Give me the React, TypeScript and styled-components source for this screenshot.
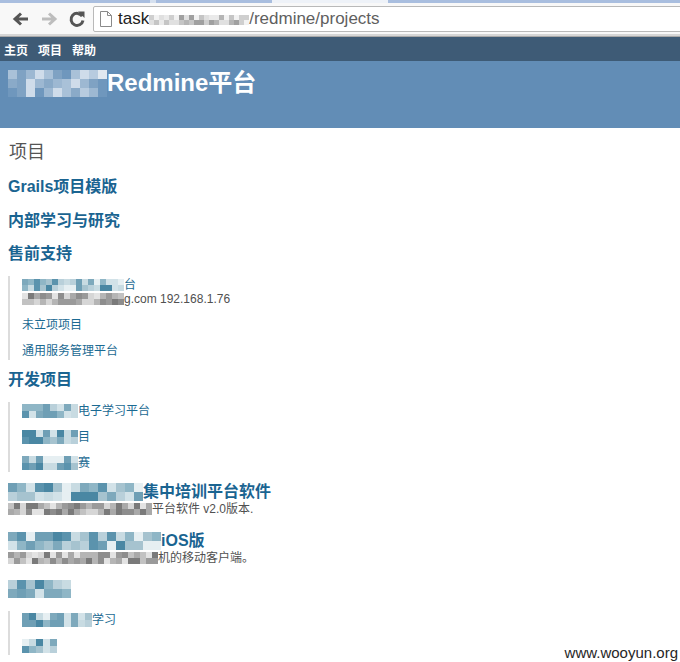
import React from 'react';
import styled, { createGlobalStyle } from 'styled-components';

const GlobalStyle = createGlobalStyle`
  html, body { margin: 0; padding: 0; background: #fff; overflow: hidden; }
  body { font-family: "Liberation Sans", "Noto Sans CJK SC", sans-serif; }
  ul { margin: 0; padding: 0; list-style: none; }
`;

const Page = styled.div`
  position: relative;
  width: 680px;
  height: 662px;
  overflow: hidden;
  background: #fff;
`;

/* ---------- browser chrome ---------- */
const TabStrip = styled.div`
  height: 3px;
  background: linear-gradient(90deg, #a9bedf 0 22%, #d5e0ef 22% 23%, #a9bedf 23% 40%, #eef2f8 40% 57%, #a9bedf 57% 100%);
`;

const Toolbar = styled.div`
  height: 31px;
  display: flex;
  align-items: flex-start;
  padding: 3px 0 0 7px;
  box-sizing: border-box;
  background: #f8f8f8;
`;

const NavButton = styled.span`
  width: 28px;
  height: 26px;
  display: flex;
  align-items: center;
  justify-content: center;
`;

const AddressBar = styled.div`
  flex: 1;
  height: 26px;
  margin-left: 2px;
  margin-right: -6px;
  box-sizing: border-box;
  border: 1px solid #b9b9b9;
  border-radius: 2px;
  background: #fff;
  display: flex;
  align-items: center;
  padding-left: 6px;
  font-size: 17px;
  white-space: nowrap;
`;

const Host = styled.span`
  color: #222;
  margin-left: 6px;
`;

const Path = styled.span`
  color: #5f5f5f;
`;

const ChromeBottom = styled.div`
  height: 3px;
  background: #d6d6d6;
  border-bottom: 1px solid #a8a8a8;
  box-sizing: border-box;
`;

/* ---------- redmine ---------- */
const TopMenu = styled.div`
  height: 24px;
  background: #3e5b76;
  display: flex;
  align-items: center;
  gap: 10px;
  padding-left: 4px;
`;

const TopMenuItem = styled.a`
  color: #fff;
  font-size: 12px;
  font-weight: bold;
  font-family: "Noto Sans CJK SC", sans-serif;
  text-decoration: none;
`;

const Header = styled.div`
  height: 67px;
  background: #628db6;
  box-sizing: border-box;
  padding: 9px 8px 0;
`;

const SiteTitle = styled.h1`
  margin: 0;
  font-size: 24px;
  line-height: 26px;
  font-weight: bold;
  color: #fff;
  white-space: nowrap;
`;

const Content = styled.div`
  padding: 11px 8px 0;
`;

const PageTitle = styled.h2`
  margin: 0 0 16px 1px;
  font-size: 18px;
  line-height: 22px;
  font-weight: normal;
  color: #555;
  font-family: "Noto Sans CJK SC", sans-serif;
`;

const Root = styled.li<{ $nested?: boolean }>`
  margin-bottom: ${(p) => (p.$nested ? '10px' : '13.5px')};
`;

const RootTitle = styled.a<{ $nested?: boolean }>`
  display: block;
  height: 20px;
  font-size: 16px;
  line-height: 20px;
  font-weight: bold;
  color: #1a6491;
  text-decoration: none;
  white-space: nowrap;
  margin-bottom: ${(p) => (p.$nested ? '12px' : '0')};
`;

const RootDesc = styled.div`
  font-size: 12px;
  line-height: 15px;
  color: #505050;
  white-space: nowrap;
`;

const Subtree = styled.ul`
  border-left: 2px solid #dcdcdc;
  padding: 2px 0 2px 12px !important;
`;

const Child = styled.li`
  & + & { margin-top: 12px; }
`;

const ChildLink = styled.a`
  display: block;
  height: 14px;
  font-size: 12px;
  line-height: 14px;
  color: #1b6a92;
  text-decoration: none;
  white-space: nowrap;
`;

const ChildDesc = styled.div`
  font-size: 12px;
  line-height: 14px;
  color: #505050;
  white-space: nowrap;
`;

const Watermark = styled.div`
  position: absolute;
  right: 2px;
  bottom: 0;
  font-size: 15px;
  line-height: 18px;
  color: #262626;
  font-family: "Liberation Sans", sans-serif;
`;

/* ---------- mosaic (pixelated redaction) ---------- */
type Tone = 'link' | 'text' | 'head' | 'url';

const palettes: Record<Tone, string[]> = {
  link: ['#4a87a3', '#5b93ad', '#8fb6c6', '#b9d0da', '#d2e2e8', '#e6eff2', '#6f9fb5', '#a6c3cf', '#c8dbe2', '#7ea9bc'],
  text: ['#7a7a7a', '#8d8d8d', '#a9a9a9', '#c2c2c2', '#d6d6d6', '#e3e3e3', '#9a9a9a', '#b5b5b5'],
  head: ['#7fa2c3', '#9db8d2', '#b7cbdf', '#cfdcea', '#a9c1d8', '#8aaac8', '#e0e8f0', '#6f97bd'],
  url: ['#b5b5b5', '#cfcfcf', '#e0e0e0', '#a0a0a0', '#eaeaea', '#c5c5c5', '#f2f2f2'],
};

const MosaicGrid = styled.span<{ $cols: number; $cell: number; $top: number }>`
  display: inline-grid;
  grid-template-columns: repeat(${(p) => p.$cols}, ${(p) => p.$cell}px);
  grid-auto-rows: ${(p) => p.$cell}px;
  vertical-align: top;
  margin-top: ${(p) => p.$top}px;
`;

const MosaicCell = styled.i`
  display: block;
`;

function Mosaic({ w, h, cell = 7, tone, seed = 1, top = 0 }: { w: number; h: number; cell?: number; tone: Tone; seed?: number; top?: number }) {
  const cols = Math.max(1, Math.round(w / cell));
  const rows = Math.max(1, Math.round(h / cell));
  const pal = palettes[tone];
  let s = seed * 9301 + 49297;
  const rnd = () => {
    s = (s * 9301 + 49297) % 233280;
    return s / 233280;
  };
  const cells = [];
  for (let i = 0; i < cols * rows; i++) {
    cells.push(<MosaicCell key={i} style={{ background: pal[Math.floor(rnd() * pal.length)] }} />);
  }
  return (
    <MosaicGrid $cols={cols} $cell={cell} $top={top}>
      {cells}
    </MosaicGrid>
  );
}

/* ---------- icons ---------- */
const BackIcon = ({ color }: { color: string }) => (
  <svg width="18" height="16" viewBox="0 0 18 16">
    <path d="M16 8H4M9 2.5L3 8l6 5.5" fill="none" stroke={color} strokeWidth="3" strokeLinejoin="miter" />
  </svg>
);

const ForwardIcon = ({ color }: { color: string }) => (
  <svg width="18" height="16" viewBox="0 0 18 16">
    <path d="M2 8h12M9 2.5L15 8l-6 5.5" fill="none" stroke={color} strokeWidth="3" />
  </svg>
);

const ReloadIcon = () => (
  <svg width="18" height="18" viewBox="0 0 18 18">
    <path d="M14.2 6.2A6 6 0 1 0 15 10.5" fill="none" stroke="#555" strokeWidth="3" />
    <path d="M10 1.5h6.5V8z" fill="#555" />
  </svg>
);

const PageIcon = () => (
  <svg width="12" height="16" viewBox="0 0 12 16">
    <path d="M0.5 0.5h7l4 4v11h-11z" fill="#fff" stroke="#8a8a8a" />
    <path d="M7.5 0.5v4h4" fill="none" stroke="#8a8a8a" />
  </svg>
);

export default function App() {
  return (
    <Page>
      <GlobalStyle />
      <TabStrip />
      <Toolbar>
        <NavButton><BackIcon color="#555" /></NavButton>
        <NavButton><ForwardIcon color="#bdbdbd" /></NavButton>
        <NavButton><ReloadIcon /></NavButton>
        <AddressBar>
          <PageIcon />
          <Host>task</Host>
          <Mosaic w={100} h={10} cell={5} tone="url" seed={3} top={2} />
          <Path>/redmine/projects</Path>
        </AddressBar>
      </Toolbar>
      <ChromeBottom />

      <TopMenu>
        <TopMenuItem>主页</TopMenuItem>
        <TopMenuItem>项目</TopMenuItem>
        <TopMenuItem>帮助</TopMenuItem>
      </TopMenu>

      <Header>
        <SiteTitle>
          <Mosaic w={99} h={27} cell={9} tone="head" seed={7} top={0} />
          Redmine平台
        </SiteTitle>
      </Header>

      <Content>
        <PageTitle>项目</PageTitle>
        <ul>
          <Root>
            <RootTitle>Grails项目模版</RootTitle>
          </Root>
          <Root>
            <RootTitle>内部学习与研究</RootTitle>
          </Root>
          <Root $nested>
            <RootTitle $nested>售前支持</RootTitle>
            <Subtree>
              <Child>
                <ChildLink>
                  <Mosaic w={102} h={12} cell={6} tone="link" seed={11} top={1} />台
                </ChildLink>
                <ChildDesc>
                  <Mosaic w={102} h={12} cell={6} tone="text" seed={12} top={1} />g.com 192.168.1.76
                </ChildDesc>
              </Child>
              <Child>
                <ChildLink>未立项项目</ChildLink>
              </Child>
              <Child>
                <ChildLink>通用服务管理平台</ChildLink>
              </Child>
            </Subtree>
          </Root>
          <Root $nested>
            <RootTitle $nested>开发项目</RootTitle>
            <Subtree>
              <Child>
                <ChildLink>
                  <Mosaic w={56} h={14} cell={7} tone="link" seed={21} />电子学习平台
                </ChildLink>
              </Child>
              <Child>
                <ChildLink>
                  <Mosaic w={56} h={14} cell={7} tone="link" seed={22} />目
                </ChildLink>
              </Child>
              <Child>
                <ChildLink>
                  <Mosaic w={56} h={14} cell={7} tone="link" seed={23} />赛
                </ChildLink>
              </Child>
            </Subtree>
          </Root>
          <Root>
            <RootTitle>
              <Mosaic w={136} h={18} cell={9} tone="link" seed={31} top={1} />集中培训平台软件
            </RootTitle>
            <RootDesc>
              <Mosaic w={146} h={12} cell={6} tone="text" seed={32} top={1} />平台软件 v2.0版本.
            </RootDesc>
          </Root>
          <Root>
            <RootTitle>
              <Mosaic w={153} h={18} cell={9} tone="link" seed={41} top={1} />iOS版
            </RootTitle>
            <RootDesc>
              <Mosaic w={150} h={12} cell={6} tone="text" seed={42} top={1} />机的移动客户端。
            </RootDesc>
          </Root>
          <Root $nested>
            <RootTitle $nested>
              <Mosaic w={66} h={18} cell={9} tone="link" seed={51} top={1} />
            </RootTitle>
            <Subtree>
              <Child>
                <ChildLink>
                  <Mosaic w={72} h={14} cell={7} tone="link" seed={61} />学习
                </ChildLink>
              </Child>
              <Child>
                <ChildLink>
                  <Mosaic w={35} h={14} cell={7} tone="link" seed={62} />
                </ChildLink>
              </Child>
            </Subtree>
          </Root>
        </ul>
      </Content>

      <Watermark>www.wooyun.org</Watermark>
    </Page>
  );
}
